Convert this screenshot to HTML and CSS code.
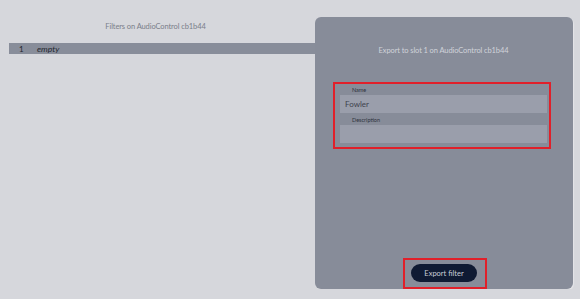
FILE: index.html
```html
<!DOCTYPE html>
<html>
<head>
<meta charset="utf-8">
<link rel="stylesheet" href="styles.css">
</head>
<body>
<div class="layout">
  <section class="filters">
    <h1 class="filters-title">Filters on AudioControl cb1b44</h1>
    <div class="filter-row">
      <span class="slot-num">1</span>
      <span class="slot-name">empty</span>
    </div>
  </section>
  <section class="panel">
    <h2 class="panel-title">Export to slot 1 on AudioControl cb1b44</h2>
    <div class="form">
      <label class="field-label">Name</label>
      <div class="field-input">Fowler</div>
      <label class="field-label">Description</label>
      <div class="field-input"></div>
    </div>
    <div class="actions">
      <button class="export-btn">Export filter</button>
    </div>
    <div class="highlight highlight-form"></div>
    <div class="highlight highlight-btn"></div>
  </section>
</div>
</body>
</html>
```
FILE: styles.css
```css
html, body {
  margin: 0;
  padding: 0;
  background: #d6d7dc;
  font-family: Lato, "Open Sans", sans-serif;
}
.layout {
  display: grid;
  grid-template-columns: 295px 258px;
  align-items: start;
  column-gap: 12px;
  padding: 17px 0 0 8px;
}
.filters {
  position: relative;
}
.filters-title {
  margin: 0;
  padding-top: 4px;
  font-size: 7.5px;
  letter-spacing: -0.1px;
  line-height: 12px;
  font-weight: 400;
  color: #7a7e8a;
  text-align: center;
}
.filter-row {
  margin-top: 10px;
  margin-left: 1px;
  margin-right: -20px;
  height: 11px;
  background: #888d9a;
  display: flex;
  align-items: center;
  font-size: 8px;
  font-weight: 400;
  color: #23262e;
}
.slot-num {
  width: 10px;
  margin-left: 10px;
}
.slot-name {
  margin-left: 8px;
  font-style: italic;
  font-size: 8.5px;
}
.panel {
  position: relative;
  z-index: 1;
  height: 272px;
  background: #878c99;
  border-radius: 6px;
  box-shadow: 1px 1px 1px rgba(255,255,255,0.35);
  display: flex;
  flex-direction: column;
  padding: 28px 26px 7px 25px;
  box-sizing: border-box;
}
.panel-title {
  margin: 0;
  font-size: 7.5px;
  letter-spacing: -0.1px;
  line-height: 12px;
  font-weight: 400;
  color: #d0d3da;
  text-align: center;
}
.form {
  margin-top: 29px;
  display: flex;
  flex-direction: column;
}
.field-label {
  display: block;
  font-size: 5.5px;
  line-height: 8px;
  height: 8px;
  font-weight: 400;
  color: #2f333d;
  padding-left: 12px;
}
.field-input {
  height: 18px;
  margin-top: 1px;
  margin-bottom: 3px;
  background: #9a9eab;
  font-size: 8px;
  font-weight: 400;
  line-height: 18px;
  color: #3e424d;
  padding-left: 5px;
}
.actions {
  margin-top: auto;
  display: flex;
  justify-content: center;
}
.export-btn {
  width: 66px;
  height: 18px;
  border: none;
  border-radius: 9px;
  background: #0f1a33;
  color: #c9cdd7;
  font-family: Lato, "Open Sans", sans-serif;
  font-size: 7.5px;
  font-weight: 400;
  padding: 0;
  margin-left: 1px;
}
.highlight {
  position: absolute;
  border: 2px solid #e0202a;
  box-sizing: border-box;
}
.highlight-form {
  left: 18px;
  top: 65px;
  width: 218px;
  height: 67px;
}
.highlight-btn {
  left: 88px;
  top: 241px;
  width: 84px;
  height: 31px;
}
```
